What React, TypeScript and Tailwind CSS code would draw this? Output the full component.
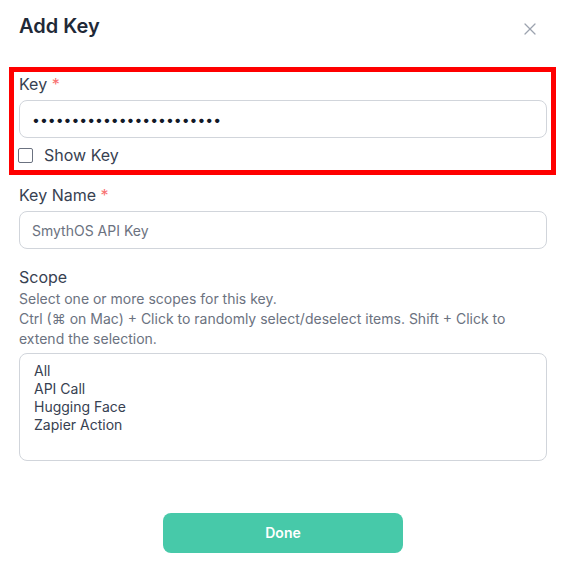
import { X } from "lucide-react";

const scopes = ["All", "API Call", "Hugging Face", "Zapier Action"];

export default function App() {
    return (
        <div className="w-[568px] h-[570px] bg-white font-['Inter',sans-serif] text-[#374151]">
            <div className="flex justify-between pl-[19px] pr-[28px] pt-[12px] h-[67px] items-start">
                <h2 className="text-[20px] leading-[28px] font-semibold text-[#1f2937]">Add Key</h2>
                <button className="mt-[7px] text-[#9ca3af]">
                    <X size={20} strokeWidth={1.5} />
                </button>
            </div>

            <div className="mx-[9px] w-[547px] border-[5px] border-[#ff0000] px-[5px] h-[108px]">
                <label className="block text-base leading-6 text-[#374151]">
                    Key <span className="text-[#f87171]">*</span>
                </label>
                <input
                    type="password"
                    readOnly
                    value="abcdefghijklmnopqrstuvwx"
                    className="mt-1 block w-[528px] h-[38px] rounded-lg border border-[#d1d5db] px-3 text-sm text-[#111827] outline-none"
                />
                <label className="mt-[5px] flex items-center gap-[11px] h-6">
                    <span className="ml-[-1px] w-[15px] h-[15px] border border-[#6b7280] rounded-[2px] bg-white" />
                    <span className="text-base leading-6 text-[#374151]">Show Key</span>
                </label>
            </div>

            <div className="px-[19px] w-[566px]">
                <label className="block mt-[8px] text-base leading-6 text-[#374151]">
                    Key Name <span className="text-[#f87171]">*</span>
                </label>
                <input
                    type="text"
                    placeholder="SmythOS API Key"
                    className="mt-1 block w-[528px] h-[38px] rounded-lg border border-[#d1d5db] px-3 text-sm text-[#111827] placeholder:text-[#6b7280] outline-none"
                />

                <label className="block mt-4 text-base leading-6 text-[#374151]">Scope</label>
                <p className="text-sm leading-5 text-[#6b7280] w-[528px]">
                    Select one or more scopes for this key.
                    <br />
                    Ctrl (⌘ on Mac) + Click to randomly select/deselect items. Shift + Click to extend the selection.
                </p>
                <div className="mt-1 w-[528px] h-[108px] rounded-lg border border-[#d1d5db] pl-[14px] pt-[8px]">
                    {scopes.map((s) => (
                        <div key={s} className="text-sm leading-[18px] text-[#374151]">
                            {s}
                        </div>
                    ))}
                </div>

                <div className="flex justify-center mt-[52px] w-[528px]">
                    <button className="w-[240px] h-10 rounded-lg bg-[#47c9a9] text-white text-sm font-semibold">
                        Done
                    </button>
                </div>
            </div>
        </div>
    );
}
